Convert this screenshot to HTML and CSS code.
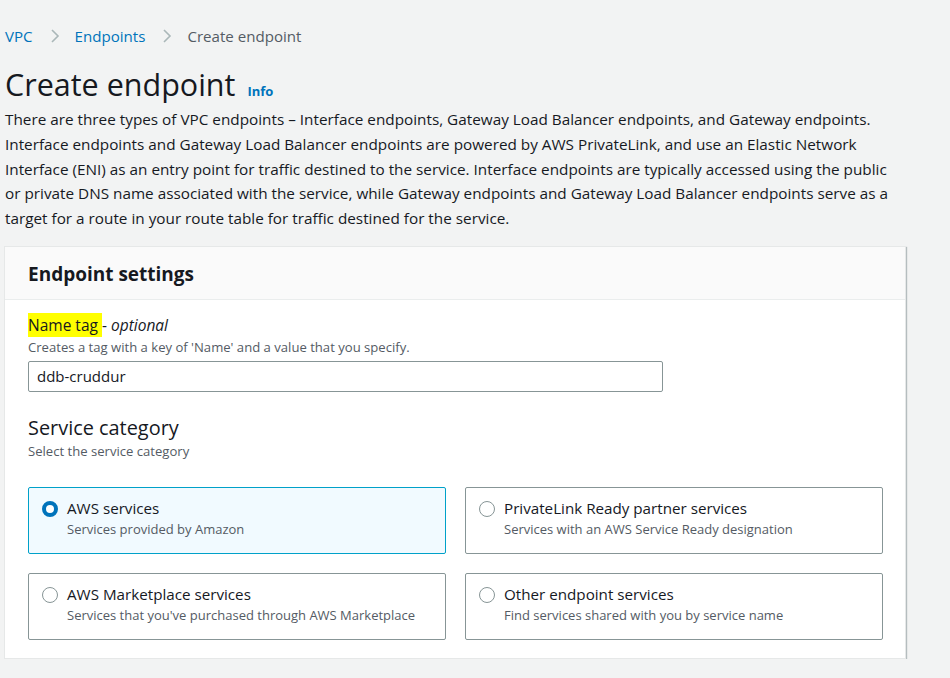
FILE: index.html
```html
<!DOCTYPE html>
<html>
<head>
<meta charset="utf-8">
<link rel="stylesheet" href="styles.css">
</head>
<body>
<div class="page">
  <nav class="crumbs">
    <a class="crumb-link">VPC</a>
    <svg class="chev" viewBox="0 0 10 16" width="10" height="16"><path d="M2 2l6 6-6 6" fill="none" stroke="#aab7b8" stroke-width="1.6"/></svg>
    <a class="crumb-link">Endpoints</a>
    <svg class="chev" viewBox="0 0 10 16" width="10" height="16"><path d="M2 2l6 6-6 6" fill="none" stroke="#aab7b8" stroke-width="1.6"/></svg>
    <span class="crumb-current">Create endpoint</span>
  </nav>
  <h1 class="title">Create endpoint <a class="info">Info</a></h1>
  <p class="desc">There are three types of VPC endpoints – Interface endpoints, Gateway Load Balancer endpoints, and Gateway endpoints. Interface endpoints and Gateway Load Balancer endpoints are powered by AWS PrivateLink, and use an Elastic Network Interface (ENI) as an entry point for traffic destined to the service. Interface endpoints are typically accessed using the public or private DNS name associated with the service, while Gateway endpoints and Gateway Load Balancer endpoints serve as a target for a route in your route table for traffic destined for the service.</p>

  <section class="card">
    <header class="card-head"><h2>Endpoint settings</h2></header>
    <div class="card-body">
      <div class="field">
        <div class="label"><span class="hl">Name tag </span>- <i>optional</i></div>
        <div class="hint">Creates a tag with a key of 'Name' and a value that you specify.</div>
        <div class="input">ddb-cruddur</div>
      </div>
      <div class="group">
        <h3 class="group-title">Service category</h3>
        <div class="hint">Select the service category</div>
      </div>
      <div class="tiles">
        <div class="tile selected">
          <span class="radio on"></span>
          <div><div class="tile-title">AWS services</div><div class="tile-desc">Services provided by Amazon</div></div>
        </div>
        <div class="tile">
          <span class="radio"></span>
          <div><div class="tile-title">PrivateLink Ready partner services</div><div class="tile-desc">Services with an AWS Service Ready designation</div></div>
        </div>
        <div class="tile">
          <span class="radio"></span>
          <div><div class="tile-title">AWS Marketplace services</div><div class="tile-desc">Services that you've purchased through AWS Marketplace</div></div>
        </div>
        <div class="tile">
          <span class="radio"></span>
          <div><div class="tile-title">Other endpoint services</div><div class="tile-desc">Find services shared with you by service name</div></div>
        </div>
      </div>
    </div>
  </section>
</div>
</body>
</html>
```

FILE: styles.css
```css
html, body {
  margin: 0;
  padding: 0;
  background: #f2f3f3;
  font-family: "Open Sans", "Noto Sans", sans-serif;
  color: #16191f;
}
.page {
  padding: 25px 0 0 5px;
  width: 901px;
}
.crumbs {
  display: flex;
  align-items: center;
  font-size: 15.1px;
  line-height: 22px;
  height: 22px;
}
.crumb-link { color: #0073bb; }
.chev { margin: 0 15px 0 17px; }
.crumb-current { color: #545b64; }
.title {
  margin: 22px 0 0 0;
  font-size: 30.5px;
  font-weight: 400;
  line-height: 31px;
}
.info {
  font-size: 13px;
  font-weight: 700;
  color: #0073bb;
  margin-left: 4px;
}
.desc {
  margin: 0;
  font-size: 15.3px;
  line-height: 24.75px;
  color: #16191f;
  width: 895px;
}
.card {
  margin: 15px 0 0 -1px;
  background: #fff;
  border: 1px solid #e6e8e8;
  box-shadow: 1px 1px 1px 0 rgba(0,28,36,0.25);
}
.card-head {
  background: #fafafa;
  border-bottom: 1px solid #eaeded;
  height: 53px;
  box-sizing: border-box;
  display: flex;
  align-items: center;
  padding: 2px 23px 0;
}
.card-head h2 {
  margin: 0;
  font-size: 19px;
  font-weight: 700;
}
.card-body {
  padding: 14px 22px 18px 23px;
}
.label {
  font-size: 15.5px;
  line-height: 22px;
}
.hl { background: #ffff00; padding: 1px 0; }
.hint {
  font-size: 13.1px;
  line-height: 20px;
  color: #545b64;
}
.field .hint { margin-top: 1px; }
.input {
  margin-top: 4px;
  width: 625px;
  height: 29px;
  border: 1px solid #879596;
  border-radius: 2px;
  padding: 0 0 0 8px;
  font-size: 15px;
  line-height: 29px;
}
.group { margin-top: 23px; }
.group-title {
  margin: 0;
  font-size: 19.9px;
  font-weight: 400;
  line-height: 26px;
}
.tiles {
  margin-top: 26px;
  display: grid;
  grid-template-columns: 1fr 1fr;
  gap: 19px 19px;
}
.tile {
  display: flex;
  gap: 9px;
  border: 1px solid #879596;
  border-radius: 2px;
  padding: 9px 13px 0 13px;
  box-sizing: border-box;
  height: 67px;
}
.tile.selected {
  border-color: #00a1c9;
  background: #f1faff;
}
.radio {
  width: 14px;
  height: 14px;
  border: 1px solid #879596;
  border-radius: 50%;
  margin-top: 4px;
  flex: none;
  box-sizing: content-box;
  background: #fff;
}
.radio.on {
  border: 4px solid #0073bb;
  width: 8px;
  height: 8px;
}
.tile-title {
  font-size: 15.2px;
  line-height: 22px;
}
.tile-desc {
  font-size: 13px;
  line-height: 20px;
  color: #545b64;
}
```
